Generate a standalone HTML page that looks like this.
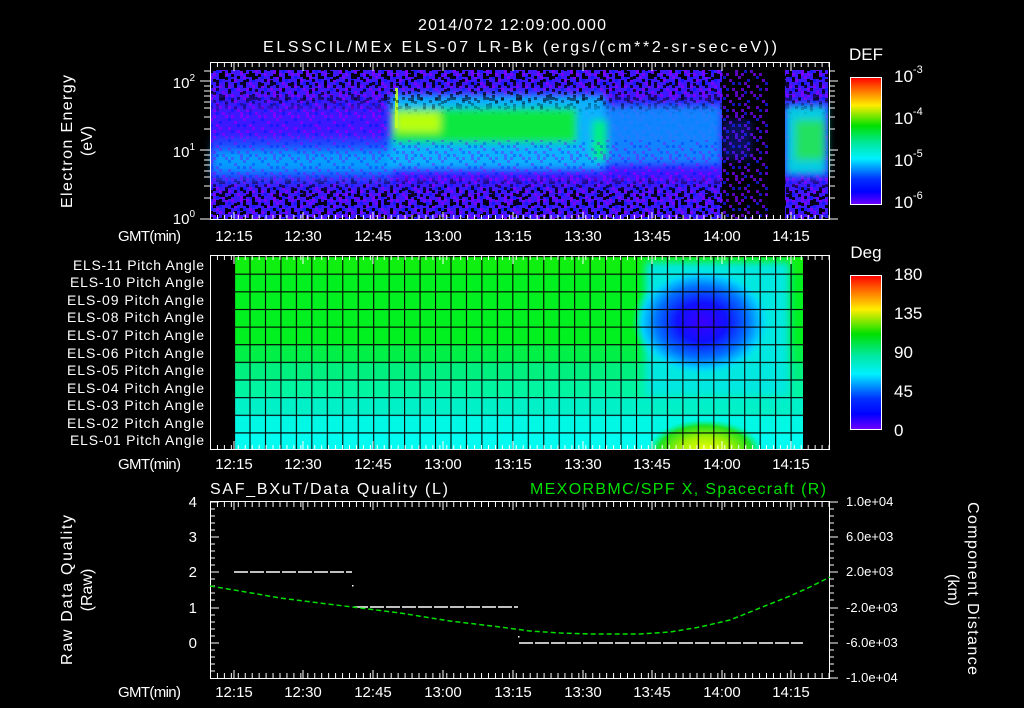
<!DOCTYPE html>
<html><head><meta charset="utf-8"><style>
html,body{margin:0;padding:0;background:#000;}
svg{display:block;}
text{font-family:"Liberation Sans",sans-serif;fill:#fff;}
</style></head><body>
<svg width="1024" height="708" viewBox="0 0 1024 708" xmlns="http://www.w3.org/2000/svg">
<defs>
  <pattern id="pk" x="210" y="70" width="33" height="21" patternUnits="userSpaceOnUse">
    <g fill="#000">
      <rect x="0" y="0" width="3" height="3"/><rect x="9" y="3" width="3" height="6"/><rect x="18" y="0" width="3" height="3"/>
      <rect x="27" y="6" width="3" height="3"/><rect x="3" y="9" width="3" height="3"/><rect x="15" y="12" width="3" height="6"/>
      <rect x="24" y="15" width="3" height="3"/><rect x="6" y="18" width="3" height="3"/><rect x="30" y="12" width="3" height="3"/>
      <rect x="12" y="6" width="3" height="3"/><rect x="21" y="9" width="3" height="3"/><rect x="0" y="15" width="3" height="3"/>
    </g>
  </pattern>
  <pattern id="pk2" x="222" y="77" width="27" height="24" patternUnits="userSpaceOnUse">
    <g fill="#000">
      <rect x="3" y="0" width="3" height="3"/><rect x="12" y="6" width="3" height="3"/><rect x="21" y="3" width="3" height="6"/>
      <rect x="6" y="12" width="3" height="3"/><rect x="18" y="15" width="3" height="3"/><rect x="0" y="18" width="3" height="6"/>
      <rect x="24" y="21" width="3" height="3"/><rect x="9" y="21" width="3" height="3"/>
    </g>
  </pattern>
  <pattern id="pp" x="210" y="70" width="33" height="21" patternUnits="userSpaceOnUse">
    <g fill="#7a00ff">
      <rect x="3" y="3" width="3" height="3"/><rect x="12" y="0" width="3" height="3"/><rect x="21" y="3" width="3" height="3"/>
      <rect x="30" y="0" width="3" height="6"/><rect x="6" y="12" width="3" height="3"/><rect x="18" y="15" width="3" height="3"/>
      <rect x="27" y="18" width="3" height="3"/><rect x="0" y="6" width="3" height="3"/><rect x="24" y="9" width="3" height="3"/>
      <rect x="9" y="15" width="3" height="3"/><rect x="15" y="3" width="3" height="3"/><rect x="3" y="18" width="3" height="3"/>
    </g>
    <g fill="#1818ff">
      <rect x="6" y="0" width="3" height="3"/><rect x="18" y="6" width="3" height="3"/><rect x="27" y="12" width="3" height="3"/>
      <rect x="9" y="9" width="3" height="3"/><rect x="21" y="18" width="3" height="3"/><rect x="0" y="12" width="3" height="3"/>
    </g>
  </pattern>
  <filter id="bl" x="-20%" y="-40%" width="140%" height="180%"><feGaussianBlur stdDeviation="4"/></filter>
  <linearGradient id="vmask" x1="0" y1="0" x2="0" y2="1">
    <stop offset="0" stop-color="#fff"/><stop offset="0.15" stop-color="#fff" stop-opacity="0.7"/>
    <stop offset="0.3" stop-color="#fff" stop-opacity="0"/><stop offset="0.7" stop-color="#fff" stop-opacity="0"/>
    <stop offset="0.8" stop-color="#fff" stop-opacity="0.8"/><stop offset="1" stop-color="#fff"/>
  </linearGradient>
  <mask id="mk"><rect x="210" y="70" width="620" height="150" fill="url(#vmask)"/></mask>
  <clipPath id="midclip"><rect x="234" y="256" width="569" height="194"/></clipPath>
  <linearGradient id="cb" x1="0" y1="0" x2="0" y2="1">
    <stop offset="0" stop-color="#ff0000"/><stop offset="0.1" stop-color="#ff7000"/>
    <stop offset="0.22" stop-color="#ffee00"/><stop offset="0.38" stop-color="#00e000"/>
    <stop offset="0.52" stop-color="#00e8a0"/><stop offset="0.64" stop-color="#00f0ff"/>
    <stop offset="0.8" stop-color="#0030ff"/><stop offset="0.9" stop-color="#0000ff"/>
    <stop offset="1" stop-color="#7000ff"/>
  </linearGradient>
  <radialGradient id="blue" cx="0.5" cy="0.5" r="0.5">
    <stop offset="0" stop-color="#3a00ff"/><stop offset="0.35" stop-color="#1010ff"/>
    <stop offset="0.65" stop-color="#0070ff"/><stop offset="0.85" stop-color="#00d0ff"/>
    <stop offset="1" stop-color="#00f0e0" stop-opacity="0"/>
  </radialGradient>
  <radialGradient id="yel" cx="0.5" cy="0.6" r="0.5">
    <stop offset="0" stop-color="#f0ff00"/><stop offset="0.45" stop-color="#a0f000"/>
    <stop offset="0.8" stop-color="#20e020"/><stop offset="1" stop-color="#00f080" stop-opacity="0"/>
  </radialGradient>
  <pattern id="grid" x="234" y="256" width="15.46" height="17.64" patternUnits="userSpaceOnUse">
    <path d="M0 0 V17.64 M0 0 H15.46" stroke="#000" stroke-width="2.2" fill="none"/>
  </pattern>
  <pattern id="tk" x="210" y="0" width="6.95" height="10" patternUnits="userSpaceOnUse">
    <line x1="0.5" y1="0" x2="0.5" y2="10" stroke="#fff" stroke-width="1"/>
  </pattern>
</defs>

<!-- Titles -->
<text x="418" y="30" font-size="16" textLength="188" lengthAdjust="spacing">2014/072 12:09:00.000</text>
<text x="263" y="52" font-size="16" textLength="514" lengthAdjust="spacing">ELSSCIL/MEx ELS-07 LR-Bk  (ergs/(cm**2-sr-sec-eV))</text>

<!-- TOP PANEL -->
<rect x="210" y="70" width="618" height="150" fill="#3c18ff"/>
<rect x="210" y="70" width="618" height="150" fill="url(#pp)"/>
<g filter="url(#bl)">
  <rect x="212" y="150" width="180" height="22" fill="#00d0ff" opacity="0.85"/>
  <rect x="212" y="138" width="180" height="44" fill="#0080ff" opacity="0.45"/>
  <rect x="390" y="95" width="215" height="75" fill="#00d8ff" opacity="0.8"/>
  <rect x="392" y="108" width="185" height="35" fill="#10e840"/>
  <rect x="395" y="112" width="45" height="20" fill="#b8ff10"/>
  <rect x="600" y="105" width="122" height="60" fill="#00b0ff" opacity="0.7"/>
  <rect x="592" y="120" width="15" height="40" fill="#00f080"/>
  <rect x="785" y="105" width="42" height="70" fill="#00e0e0" opacity="0.9"/>
  <rect x="795" y="120" width="30" height="40" fill="#20e060"/>
</g>
<rect x="212" y="140" width="510" height="40" fill="url(#pp)" opacity="0.35"/>
<rect x="395" y="88" width="3" height="40" fill="#c0ff20" opacity="0.9"/>
<rect x="210" y="70" width="618" height="150" fill="url(#pk)" mask="url(#mk)"/>
<rect x="210" y="70" width="618" height="150" fill="url(#pk2)" mask="url(#mk)"/>
<rect x="722" y="70" width="63" height="150" fill="#000"/>
<rect x="722" y="70" width="46" height="150" fill="url(#pp)" opacity="0.75"/>
<rect x="722" y="120" width="30" height="40" fill="#2030ff" opacity="0.35" filter="url(#bl)"/>
<!-- top frame -->
<rect x="210.5" y="62.5" width="619" height="157" fill="none" stroke="#fff"/>
<rect x="210" y="63" width="619" height="4" fill="url(#tk)"/>
<rect x="210" y="215" width="619" height="4" fill="url(#tk)"/>
<g stroke="#fff">
  <path d="M234 63v8M303 63v8M373 63v8M443 63v8M513 63v8M583 63v8M652 63v8M722 63v8M791 63v8"/>
  <path d="M234 212v8M303 212v8M373 212v8M443 212v8M513 212v8M583 212v8M652 212v8M722 212v8M791 212v8"/>
  <path d="M200 81h10M200 150h10M200 219h10M204 198h6M204 186h6M204 177h6M204 171h6M204 165h6M204 160h6M204 155h6M204 129h6M204 117h6M204 108h6M204 102h6M204 96h6M204 91h6M204 86h6M204 71h6"/>
  <path d="M829 81h9M829 150h9M829 219h9M829 198h6M829 186h6M829 177h6M829 171h6M829 165h6M829 160h6M829 155h6M829 129h6M829 117h6M829 108h6M829 102h6M829 96h6M829 91h6M829 86h6M829 71h6"/>
</g>
<text x="195" y="88" font-size="15" text-anchor="end">10<tspan font-size="10" dy="-7">2</tspan></text>
<text x="195" y="157" font-size="15" text-anchor="end">10<tspan font-size="10" dy="-7">1</tspan></text>
<text x="195" y="224" font-size="15" text-anchor="end">10<tspan font-size="10" dy="-7">0</tspan></text>
<text transform="translate(72,208) rotate(-90)" font-size="16" textLength="133" lengthAdjust="spacing">Electron Energy</text>
<text transform="translate(92,141) rotate(-90)" font-size="16" text-anchor="middle">(eV)</text>
<g font-size="15" text-anchor="middle">
  <text x="234" y="241">12:15</text><text x="303" y="241">12:30</text><text x="373" y="241">12:45</text>
  <text x="443" y="241">13:00</text><text x="513" y="241">13:15</text><text x="583" y="241">13:30</text>
  <text x="652" y="241">13:45</text><text x="722" y="241">14:00</text><text x="791" y="241">14:15</text>
</g>
<text x="118" y="241" font-size="15" textLength="63" lengthAdjust="spacing">GMT(min)</text>
<!-- top colorbar -->
<text x="866" y="60" font-size="17" text-anchor="middle">DEF</text>
<rect x="850.5" y="77.5" width="31" height="127" fill="url(#cb)" stroke="#fff"/>
<g font-size="17">
  <text x="894" y="82">10<tspan font-size="11" dy="-9">-3</tspan></text>
  <text x="894" y="124">10<tspan font-size="11" dy="-9">-4</tspan></text>
  <text x="894" y="166">10<tspan font-size="11" dy="-9">-5</tspan></text>
  <text x="894" y="208">10<tspan font-size="11" dy="-9">-6</tspan></text>
</g>

<!-- MIDDLE PANEL -->
<g clip-path="url(#midclip)">
<rect x="234" y="256" width="569" height="17.6" fill="#10f010"/>
<rect x="234" y="273.6" width="569" height="70.6" fill="#00f020"/>
<rect x="234" y="344.2" width="569" height="17.6" fill="#00f048"/>
<rect x="234" y="361.8" width="569" height="17.6" fill="#00f080"/>
<rect x="234" y="379.4" width="569" height="17.6" fill="#00f5a0"/>
<rect x="234" y="397" width="569" height="17.6" fill="#00f0c8"/>
<rect x="234" y="414.6" width="569" height="17.6" fill="#00f8e4"/>
<rect x="234" y="432.2" width="569" height="17.8" fill="#00fcf0"/>
<rect x="645" y="262" width="145" height="135" fill="#00e8e0" filter="url(#bl)"/>
<ellipse cx="702" cy="322" rx="70" ry="55" fill="url(#blue)"/>
<ellipse cx="705" cy="445" rx="58" ry="32" fill="url(#yel)"/>
<rect x="234" y="256" width="569" height="194" fill="url(#grid)"/>
</g>
<rect x="210.5" y="255.5" width="619" height="194" fill="none" stroke="#fff"/>
<rect x="210" y="256" width="619" height="4" fill="url(#tk)"/>
<rect x="210" y="445" width="619" height="4" fill="url(#tk)"/>
<g stroke="#fff">
  <path d="M234 256v8M303 256v8M373 256v8M443 256v8M513 256v8M583 256v8M652 256v8M722 256v8M791 256v8"/>
  <path d="M234 441v8M303 441v8M373 441v8M443 441v8M513 441v8M583 441v8M652 441v8M722 441v8M791 441v8"/>
</g>
<g font-size="14">
  <text x="73" y="270" textLength="131" lengthAdjust="spacing">ELS-11 Pitch Angle</text>
  <text x="70" y="287" textLength="134" lengthAdjust="spacing">ELS-10 Pitch Angle</text>
  <text x="67" y="305" textLength="137" lengthAdjust="spacing">ELS-09 Pitch Angle</text>
  <text x="67" y="322" textLength="137" lengthAdjust="spacing">ELS-08 Pitch Angle</text>
  <text x="67" y="340" textLength="137" lengthAdjust="spacing">ELS-07 Pitch Angle</text>
  <text x="67" y="358" textLength="137" lengthAdjust="spacing">ELS-06 Pitch Angle</text>
  <text x="67" y="375" textLength="137" lengthAdjust="spacing">ELS-05 Pitch Angle</text>
  <text x="67" y="393" textLength="137" lengthAdjust="spacing">ELS-04 Pitch Angle</text>
  <text x="67" y="410" textLength="137" lengthAdjust="spacing">ELS-03 Pitch Angle</text>
  <text x="67" y="428" textLength="137" lengthAdjust="spacing">ELS-02 Pitch Angle</text>
  <text x="70" y="445" textLength="134" lengthAdjust="spacing">ELS-01 Pitch Angle</text>
</g>
<g font-size="15" text-anchor="middle">
  <text x="234" y="469">12:15</text><text x="303" y="469">12:30</text><text x="373" y="469">12:45</text>
  <text x="443" y="469">13:00</text><text x="513" y="469">13:15</text><text x="583" y="469">13:30</text>
  <text x="652" y="469">13:45</text><text x="722" y="469">14:00</text><text x="791" y="469">14:15</text>
</g>
<text x="118" y="469" font-size="15" textLength="63" lengthAdjust="spacing">GMT(min)</text>
<!-- mid colorbar -->
<text x="866" y="258" font-size="17" text-anchor="middle">Deg</text>
<rect x="850.5" y="275.5" width="31" height="154" fill="url(#cb)" stroke="#fff"/>
<g font-size="17">
  <text x="894" y="280">180</text><text x="894" y="319">135</text>
  <text x="894" y="358">90</text><text x="894" y="397">45</text><text x="894" y="436">0</text>
</g>

<!-- BOTTOM PANEL -->
<text x="210" y="494" font-size="16" textLength="238" lengthAdjust="spacing">SAF_BXuT/Data Quality (L)</text>
<text x="530" y="494" font-size="16" textLength="296" lengthAdjust="spacing" style="fill:#00e000">MEXORBMC/SPF X, Spacecraft (R)</text>
<rect x="210.5" y="501.5" width="619" height="177" fill="none" stroke="#fff"/>
<rect x="210" y="502" width="619" height="5" fill="url(#tk)"/>
<rect x="210" y="673" width="619" height="5" fill="url(#tk)"/>
<g stroke="#fff">
  <path d="M234 502v8M303 502v8M373 502v8M443 502v8M513 502v8M583 502v8M652 502v8M722 502v8M791 502v8"/>
  <path d="M234 670v8M303 670v8M373 670v8M443 670v8M513 670v8M583 670v8M652 670v8M722 670v8M791 670v8"/>
  <path d="M210 502h9M210 537h9M210 572h9M210 608h9M210 643h9M210 509h5M210 516h5M210 523h5M210 530h5M210 544h5M210 551h5M210 558h5M210 565h5M210 579h5M210 586h5M210 593h5M210 600h5M210 615h5M210 622h5M210 629h5M210 636h5M210 650h5M210 657h5M210 664h5M210 671h5"/>
  <path d="M829 502h9M829 537h9M829 572h9M829 608h9M829 643h9M829 678h9M829 509h5M829 516h5M829 523h5M829 530h5M829 544h5M829 551h5M829 558h5M829 565h5M829 579h5M829 586h5M829 593h5M829 600h5M829 615h5M829 622h5M829 629h5M829 636h5M829 650h5M829 657h5M829 664h5M829 671h5"/>
</g>
<g stroke="#fff" stroke-width="1.5" stroke-dasharray="14 2">
  <line x1="234" y1="572" x2="352" y2="572"/>
  <line x1="354" y1="607" x2="518" y2="607"/>
  <line x1="519" y1="643" x2="803" y2="643"/>
</g>
<rect x="352" y="585" width="1.5" height="1.5" fill="#fff"/>
<rect x="518" y="636" width="1.5" height="1.5" fill="#fff"/>
<polyline fill="none" stroke="#00e000" stroke-width="1.5" stroke-dasharray="5 3" points="210,586 240,591 280,598 320,603 352,607 400,613 450,621 500,627 530,631 560,633 590,634 640,634 670,632 700,627 730,620 760,608 790,596 810,587 830,577"/>
<g font-size="15" text-anchor="end">
  <text x="197" y="507">4</text><text x="197" y="542">3</text><text x="197" y="577">2</text>
  <text x="197" y="613">1</text><text x="197" y="648">0</text>
</g>
<g font-size="13">
  <text x="846" y="506">1.0e+04</text><text x="846" y="541">6.0e+03</text><text x="846" y="576">2.0e+03</text>
  <text x="846" y="612">-2.0e+03</text><text x="846" y="647">-6.0e+03</text><text x="846" y="682">-1.0e+04</text>
</g>
<text transform="translate(72,665) rotate(-90)" font-size="16" textLength="150" lengthAdjust="spacing">Raw Data Quality</text>
<text transform="translate(92,590) rotate(-90)" font-size="16" text-anchor="middle">(Raw)</text>
<text transform="translate(968,502) rotate(90)" font-size="16" textLength="173" lengthAdjust="spacing">Component Distance</text>
<text transform="translate(948,590) rotate(90)" font-size="16" text-anchor="middle">(km)</text>
<g font-size="15" text-anchor="middle">
  <text x="234" y="697">12:15</text><text x="303" y="697">12:30</text><text x="373" y="697">12:45</text>
  <text x="443" y="697">13:00</text><text x="513" y="697">13:15</text><text x="583" y="697">13:30</text>
  <text x="652" y="697">13:45</text><text x="722" y="697">14:00</text><text x="791" y="697">14:15</text>
</g>
<text x="118" y="697" font-size="15" textLength="63" lengthAdjust="spacing">GMT(min)</text>
</svg>
</body></html>
